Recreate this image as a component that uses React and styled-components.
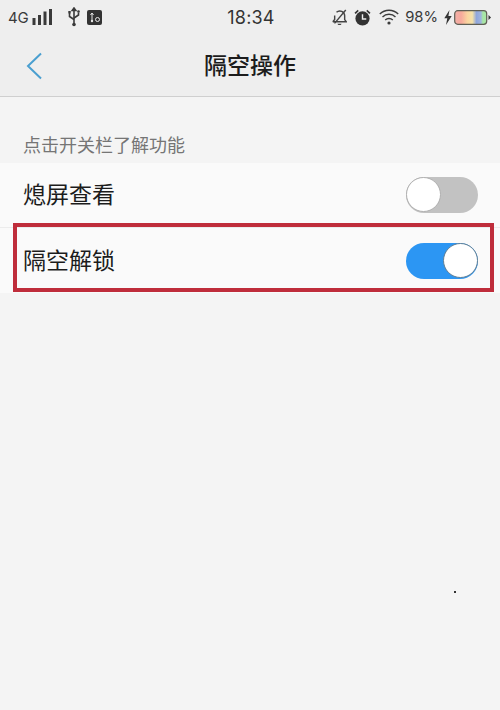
import React, { useState } from 'react'
import styled, { createGlobalStyle } from "styled-components"

const Global = createGlobalStyle`
html,body{
  margin:0;
  padding:0;
  background:#f4f4f4;
}
*{box-sizing:border-box;}
`

const Page = styled.div`
width:500px;
height:710px;
position:relative;
overflow:hidden;
background:#f4f4f4;
font-family:"Noto Sans CJK SC","Noto Sans",sans-serif;
`

const Top = styled.header`
height:97px;
background:#eeeeee;
border-bottom:1px solid #cfcfcf;
display:flex;
flex-direction:column;
`

const StatusBar = styled.div`
height:34px;
padding:0 9px 0 8px;
display:grid;
grid-template-columns:1fr auto 1fr;
align-items:center;
color:#3a3a3a;
font-family:"Inter","Liberation Sans",sans-serif;
`

const StatusLeft = styled.div`
display:flex;
align-items:center;
font-size:15px;
letter-spacing:-0.3px;
`

const StatusRight = styled.div`
display:flex;
align-items:center;
justify-content:flex-end;
font-size:14.8px;
`

const Time = styled.div`
font-size:18px;
letter-spacing:0.2px;
color:#333;
margin-left:3px;
`

const NavBar = styled.div`
flex:1;
position:relative;
display:flex;
align-items:center;
justify-content:center;
padding-bottom:3px;
`

const BackButton = styled.button`
position:absolute;
left:24px;
top:18px;
border:none;
background:none;
padding:0;
height:28px;
cursor:pointer;
`

const Title = styled.h1`
margin:0;
font-size:23px;
font-weight:500;
color:#1c1c1c;
`

const Caption = styled.p`
margin:0;
height:66px;
padding:34px 0 0 23px;
font-size:18px;
line-height:26px;
color:#757575;
`

const List = styled.div`
position:relative;
background:#fafafa;
`

const Row = styled.div`
height:65px;
padding:0 22px 0 23px;
display:flex;
align-items:center;
justify-content:space-between;
border-bottom:${p => p.$last ? "none" : "1px solid #ececec"};
`

const Label = styled.span`
font-size:23px;
line-height:30px;
margin-bottom:4px;
color:#1c1c1c;
`

const Switch = styled.button`
width:72px;
height:36px;
padding:0;
border-radius:18px;
border:none;
position:relative;
cursor:pointer;
background:${p => p.$on ? "#2c96f3" : "#c2c2c2"};
`

const Knob = styled.span`
position:absolute;
top:0;
left:${p => p.$on ? "37px" : "0"};
width:35px;
height:35px;
border-radius:50%;
background:#fff;
border:1px solid ${p => p.$on ? "#5f7f96" : "#b0b0b0"};
`

const Highlight = styled.div`
position:absolute;
left:13px;
top:60px;
width:481px;
height:69px;
border:4px solid #bf2d3b;
pointer-events:none;
`

const Speck = styled.i`
position:absolute;
left:454px;
top:591px;
width:2px;
height:2px;
background:#333;
`

const Gap = styled.span`
display:inline-block;
width:${p => p.$w}px;
`

const Signal = () => (
  <svg width="21" height="18" viewBox="0 0 21 18" fill="#3a3a3a">
    <rect x="0.5" y="10" width="3" height="7" />
    <rect x="6" y="7" width="3" height="10" />
    <rect x="11.5" y="3.5" width="3" height="13.5" />
    <rect x="17" y="1" width="3" height="16" />
  </svg>
)

const Usb = () => (
  <svg width="12" height="20" viewBox="0 0 12 20" fill="none" stroke="#3a3a3a" strokeWidth="1.6">
    <path d="M6 19V1.5" />
    <path d="M4.2 3.5 6 1l1.8 2.5z" fill="#3a3a3a" />
    <path d="M1.5 6v3.5L6 12.5" />
    <path d="M10.5 5.5v2.5L6 11" />
    <rect x="0.3" y="4" width="2.4" height="2.4" fill="#3a3a3a" stroke="none" />
    <circle cx="10.5" cy="4.5" r="1.3" fill="#3a3a3a" stroke="none" />
    <circle cx="6" cy="17.5" r="1.8" fill="#3a3a3a" stroke="none" />
  </svg>
)

const UsbBox = () => (
  <svg width="15" height="15" viewBox="0 0 15 15">
    <rect width="15" height="15" rx="2" fill="#333" />
    <path d="M5 3v8M3.5 5 5 3l1.5 2" stroke="#e8e8e8" strokeWidth="1" fill="none" />
    <circle cx="5" cy="11" r="1.2" fill="#e8e8e8" />
    <circle cx="10.5" cy="9.5" r="2" fill="none" stroke="#e8e8e8" strokeWidth="1" />
  </svg>
)

const BellOff = () => (
  <svg width="15" height="17" viewBox="0 0 18 20" fill="none" stroke="#444" strokeWidth="1.7">
    <path d="M1 15h16l-1.8-2.5V8a5.8 5.8 0 0 0-9.8-4.2" />
    <path d="M3.2 7.5v5L1 15" />
    <path d="M16.5 1 3 17" />
    <path d="M6.5 17.5h5l-1 1.6h-3z" fill="#444" stroke="none" />
  </svg>
)

const Alarm = () => (
  <svg width="17" height="17" viewBox="0 0 18 18">
    <circle cx="9" cy="10" r="7.5" fill="#333" />
    <path d="M9 5.5V10.5H13" stroke="#eee" strokeWidth="1.5" fill="none" />
    <path d="M0.5 4 4 0.8 5 2 1.8 5.2zM17.5 4 14 0.8 13 2 16.2 5.2z" fill="#333" />
  </svg>
)

const Wifi = () => (
  <svg width="20" height="16" viewBox="0 0 20 16" fill="none" stroke="#3c3c3c" strokeWidth="1.4">
    <path d="M0.8 5a13 13 0 0 1 18.4 0" />
    <path d="M3.5 8a9.2 9.2 0 0 1 13 0" />
    <path d="M6.2 11a5.4 5.4 0 0 1 7.6 0" />
    <circle cx="10" cy="14" r="1.6" fill="#3c3c3c" stroke="none" />
  </svg>
)

const Bolt = () => (
  <svg width="8" height="15" viewBox="0 0 8 15" fill="#333">
    <path d="M5.5 0 0.3 8.3h3L2 15l5.7-9H4.4z" />
  </svg>
)

const Battery = () => (
  <svg width="37" height="15" viewBox="0 0 37 15">
    <defs>
      <linearGradient id="cells" x1="0" x2="1" y1="0" y2="0">
        <stop offset="0" stopColor="#f2b0a8" />
        <stop offset="0.2" stopColor="#f7a99c" />
        <stop offset="0.4" stopColor="#fbd5a0" />
        <stop offset="0.55" stopColor="#f5e2a8" />
        <stop offset="0.68" stopColor="#8fa6dc" />
        <stop offset="0.82" stopColor="#9fb4de" />
        <stop offset="0.88" stopColor="#a8e6a6" />
        <stop offset="1" stopColor="#a8e6a6" />
      </linearGradient>
    </defs>
    <rect x="0.7" y="0.7" width="32" height="13.6" rx="3" fill="url(#cells)" stroke="#5f5f55" strokeWidth="1.2" />
    <path d="M34.5 5 37 7.5 34.5 10z" fill="#333" />
  </svg>
)

const App = () => {
  const [wake, setWake] = useState(false)
  const [unlock, setUnlock] = useState(true)

  return (
    <Page>
      <Global />
      <Top>
        <StatusBar>
          <StatusLeft>
            4G<Gap $w={4} /><Signal /><Gap $w={15} /><Usb /><Gap $w={7} /><UsbBox />
          </StatusLeft>
          <Time>18:34</Time>
          <StatusRight>
            <BellOff /><Gap $w={7} /><Alarm /><Gap $w={8} /><Wifi /><Gap $w={6} />98%<Gap $w={6} /><Bolt /><Gap $w={2} /><Battery />
          </StatusRight>
        </StatusBar>
        <NavBar>
          <BackButton>
            <svg width="20" height="28" viewBox="0 0 20 28" fill="none" stroke="#4a9fd0" strokeWidth="2">
              <path d="M17 1.5 4 14l13 12.5" />
            </svg>
          </BackButton>
          <Title>隔空操作</Title>
        </NavBar>
      </Top>
      <Caption>点击开关栏了解功能</Caption>
      <List>
        <Row>
          <Label>熄屏查看</Label>
          <Switch $on={wake} onClick={() => setWake(!wake)}><Knob $on={wake} /></Switch>
        </Row>
        <Row $last>
          <Label>隔空解锁</Label>
          <Switch $on={unlock} onClick={() => setUnlock(!unlock)}><Knob $on={unlock} /></Switch>
        </Row>
        <Highlight />
      </List>
      <Speck />
    </Page>
  )
}

export default App
